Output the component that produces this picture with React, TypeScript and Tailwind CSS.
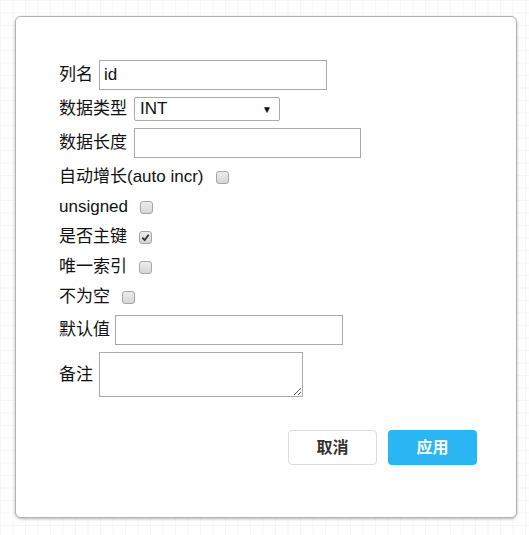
import React from "react";

const font = {
  fontFamily: '"Liberation Sans", Arial, "Noto Sans CJK SC", sans-serif',
};

function Check({ checked = false }: { checked?: boolean }) {
  return (
    <span className="ml-[12px] inline-flex h-[13px] w-[13px] items-center justify-center rounded-[3px] border border-[#a6a6a6] bg-[linear-gradient(#ececec,#d6d6d6)]">
      {checked && (
        <svg viewBox="0 0 10 10" className="h-[9px] w-[9px]">
          <path
            d="M1.5 5.2 L4 7.8 L8.6 2"
            fill="none"
            stroke="#333"
            strokeWidth="2"
          />
        </svg>
      )}
    </span>
  );
}

export default function App() {
  return (
    <div
      className="h-[535px] w-[529px] overflow-hidden bg-white bg-[linear-gradient(to_right,#f5f5f5_1px,transparent_1px),linear-gradient(to_bottom,#f5f5f5_1px,transparent_1px)] bg-[size:12.5px_12.5px] pl-[15px] pt-[16px]"
      style={font}
    >
      <div className="w-[502px] rounded-[6px] border border-[#b3b3b3] bg-white px-[39px] pb-[52px] pt-[43px] shadow-[0_1px_3px_rgba(0,0,0,0.3)]">
        <div className="flex flex-col gap-[4px] pl-[4px] text-[17px] text-[#111]">
          {/* 列名 */}
          <div className="flex h-[30px] items-center">
            <span>列名</span>
            <input
              className="ml-[6px] h-[30px] w-[228px] border border-[#a9a9a9] px-[4px] text-[17px] outline-none"
              defaultValue="id"
            />
          </div>

          {/* 数据类型 */}
          <div className="flex h-[30px] items-center">
            <span>数据类型</span>
            <div className="ml-[7px] flex h-[24px] w-[146px] items-center justify-between rounded-[2px] border border-[#a9a9a9] pl-[5px] pr-[7px]">
              <span className="text-[17px]">INT</span>
              <span className="text-[10px]">▼</span>
            </div>
          </div>

          {/* 数据长度 */}
          <div className="flex h-[30px] items-center">
            <span>数据长度</span>
            <input className="ml-[7px] h-[30px] w-[227px] border border-[#a9a9a9] px-[4px] outline-none" />
          </div>

          <div className="mt-[2px] flex h-[26px] items-center">
            <span>自动增长(auto incr)</span>
            <Check />
          </div>
          <div className="flex h-[26px] items-center">
            <span>unsigned</span>
            <Check />
          </div>
          <div className="flex h-[26px] items-center">
            <span>是否主键</span>
            <Check checked />
          </div>
          <div className="flex h-[26px] items-center">
            <span>唯一索引</span>
            <Check />
          </div>
          <div className="flex h-[26px] items-center">
            <span>不为空</span>
            <Check />
          </div>

          {/* 默认值 */}
          <div className="mt-[1px] flex h-[30px] items-center">
            <span>默认值</span>
            <input className="ml-[5px] h-[30px] w-[228px] border border-[#a9a9a9] px-[4px] outline-none" />
          </div>

          {/* 备注 */}
          <div className="mt-[3px] flex items-center">
            <span>备注</span>
            <textarea className="ml-[6px] h-[45px] w-[204px] border border-[#a9a9a9] outline-none" />
          </div>
        </div>

        <div className="mt-[33px] flex justify-end gap-[11px]">
          <button className="h-[35px] w-[89px] rounded-[4px] border border-[#dcdcdc] bg-white text-[16px] font-bold text-[#333]">
            取消
          </button>
          <button className="h-[35px] w-[89px] rounded-[4px] bg-[#2bb5f2] text-[16px] font-bold text-white">
            应用
          </button>
        </div>
      </div>
    </div>
  );
}
